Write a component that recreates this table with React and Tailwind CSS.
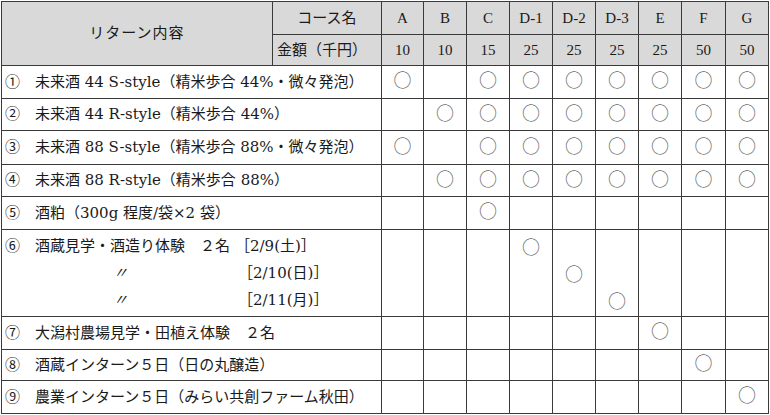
const FONT = { fontFamily: '"Liberation Serif", "Noto Sans CJK JP", serif' };
const BODY_FONT = { fontFamily: '"DejaVu Serif", "Noto Sans CJK JP", serif' };

const courses = [
  { name: "A", price: "10" },
  { name: "B", price: "10" },
  { name: "C", price: "15" },
  { name: "D-1", price: "25" },
  { name: "D-2", price: "25" },
  { name: "D-3", price: "25" },
  { name: "E", price: "25" },
  { name: "F", price: "50" },
  { name: "G", price: "50" },
];

const colWidths = [42, 43, 43, 43, 43, 43, 43, 44, 43];

// marks: course indexes that get a circle
const rows = [
  { no: "①", text: "未来酒 44 S-style（精米歩合 44%・微々発泡）", h: "h-[33px]", marks: [0, 2, 3, 4, 5, 6, 7, 8] },
  { no: "②", text: "未来酒 44 R-style（精米歩合 44%）", h: "h-[32px]", marks: [1, 2, 3, 4, 5, 6, 7, 8] },
  { no: "③", text: "未来酒 88 S-style（精米歩合 88%・微々発泡）", h: "h-[34px]", marks: [0, 2, 3, 4, 5, 6, 7, 8] },
  { no: "④", text: "未来酒 88 R-style（精米歩合 88%）", h: "h-[32px]", marks: [1, 2, 3, 4, 5, 6, 7, 8] },
  { no: "⑤", text: "酒粕（300g 程度/袋×2 袋）", h: "h-[33px]", marks: [2] },
];

const tailRows = [
  { no: "⑦", text: "大潟村農場見学・田植え体験　２名", h: "h-[33px]", marks: [6] },
  { no: "⑧", text: "酒蔵インターン５日（日の丸醸造）", h: "h-[31px]", marks: [7] },
  { no: "⑨", text: "農業インターン５日（みらい共創ファーム秋田）", h: "h-[33px]", marks: [8] },
];

const cell = "border border-[#3a3a3a] p-0";

function Mark() {
  return (
    <span className="inline-block text-[18px] leading-none text-[#6a6a6a]" style={{ fontFamily: '"Noto Sans CJK JP", sans-serif' }}>
      ○
    </span>
  );
}

function Label({ no, children }) {
  return (
    <div className="flex items-center pl-[3px]" style={BODY_FONT}>
      <span className="w-[30px] shrink-0">{no}</span>
      <span className="whitespace-nowrap">{children}</span>
    </div>
  );
}

export default function App() {
  return (
    <div className="bg-white w-[770px] h-[415px] pt-px pl-px text-[15px] text-[#1a1a1a]" style={FONT}>
      <table className="table-fixed border-collapse w-[767px]">
        <colgroup>
          <col className="w-[271px]" />
          <col className="w-[109px]" />
          {colWidths.map((w, i) => (
            <col key={i} style={{ width: w }} />
          ))}
        </colgroup>
        <thead>
          <tr className="h-[33px] bg-[#d9d9d9]">
            <th rowSpan={2} className={`${cell} font-normal text-center tracking-[1px]`}>リターン内容</th>
            <th className={`${cell} font-normal text-center`}>コース名</th>
            {courses.map((c) => (
              <th key={c.name} className={`${cell} font-normal text-center`}>{c.name}</th>
            ))}
          </tr>
          <tr className="h-[31px] bg-[#d9d9d9]">
            <th className={`${cell} font-normal text-left pl-[4px]`}>金額（千円）</th>
            {courses.map((c) => (
              <th key={c.name} className={`${cell} font-normal text-center`}>{c.price}</th>
            ))}
          </tr>
        </thead>
        <tbody>
          {rows.map((r) => (
            <tr key={r.no} className={r.h}>
              <td colSpan={2} className={cell}>
                <Label no={r.no}>{r.text}</Label>
              </td>
              {courses.map((c, i) => (
                <td key={c.name} className={`${cell} text-center align-middle`}>
                  {r.marks.includes(i) && <Mark />}
                </td>
              ))}
            </tr>
          ))}

          {/* ⑥ three-line row */}
          <tr className="h-[87px]">
            <td colSpan={2} className={cell}>
              <div className="flex flex-col" style={BODY_FONT}>
                <div className="h-[27px] flex items-center">
                  <Label no="⑥">
                    <span className="inline-block w-[200px]">酒蔵見学・酒造り体験　２名</span>
                    <span>［2/9(土)］</span>
                  </Label>
                </div>
                <div className="h-[27px] flex items-center">
                  <span className="inline-block w-[236px] pl-[111px] italic">〃</span>
                  <span>［2/10(日)］</span>
                </div>
                <div className="h-[27px] flex items-center">
                  <span className="inline-block w-[236px] pl-[111px] italic">〃</span>
                  <span>［2/11(月)］</span>
                </div>
              </div>
            </td>
            {courses.map((c, i) => (
              <td key={c.name} className={`${cell} align-middle`}>
                <div className="flex flex-col">
                  {[3, 4, 5].map((slot) => (
                    <div key={slot} className="h-[27px] flex items-center justify-center">
                      {i === slot && <Mark />}
                    </div>
                  ))}
                </div>
              </td>
            ))}
          </tr>

          {tailRows.map((r) => (
            <tr key={r.no} className={r.h}>
              <td colSpan={2} className={cell}>
                <Label no={r.no}>{r.text}</Label>
              </td>
              {courses.map((c, i) => (
                <td key={c.name} className={`${cell} text-center align-middle`}>
                  {r.marks.includes(i) && <Mark />}
                </td>
              ))}
            </tr>
          ))}
        </tbody>
      </table>
    </div>
  );
}
